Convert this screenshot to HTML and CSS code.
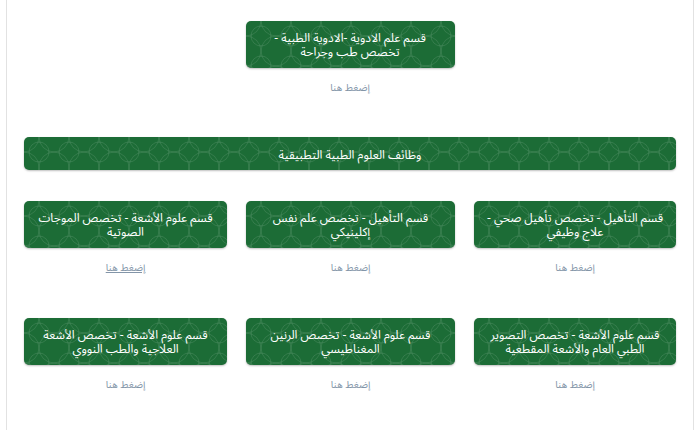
FILE: index.html
```html
<!DOCTYPE html>
<html lang="ar" dir="rtl">
<head>
    <meta charset="UTF-8">
    <meta name="viewport" content="width=device-width, initial-scale=1.0">
    <title>الأقسام والتخصصات</title>
    <link rel="stylesheet" href="styles.css">
</head>
<body>
    <div class="page">
        <div class="single">
            <div class="card">
                <div class="card-box">قسم علم الادوية -الادوية الطبية - تخصص طب وجراحة</div>
                <a class="card-link" href="#">إضغط هنا</a>
            </div>
        </div>

        <div class="section-bar">وظائف العلوم الطبية التطبيقية</div>

        <div class="card-grid">
            <div class="card">
                <div class="card-box">قسم التأهيل - تخصص تأهيل صحي - علاج وظيفي</div>
                <a class="card-link" href="#">إضغط هنا</a>
            </div>
            <div class="card">
                <div class="card-box">قسم التأهيل - تخصص علم نفس إكلينيكي</div>
                <a class="card-link" href="#">إضغط هنا</a>
            </div>
            <div class="card">
                <div class="card-box">قسم علوم الأشعة - تخصص الموجات الصوتية</div>
                <a class="card-link is-hover" href="#">إضغط هنا</a>
            </div>
            <div class="card">
                <div class="card-box">قسم علوم الأشعة - تخصص التصوير الطبي العام والأشعة المقطعية</div>
                <a class="card-link" href="#">إضغط هنا</a>
            </div>
            <div class="card">
                <div class="card-box">قسم علوم الأشعة - تخصص الرنين المغناطيسي</div>
                <a class="card-link" href="#">إضغط هنا</a>
            </div>
            <div class="card">
                <div class="card-box">قسم علوم الأشعة - تخصص الأشعة العلاجية والطب النووي</div>
                <a class="card-link" href="#">إضغط هنا</a>
            </div>
        </div>
    </div>
</body>
</html>
```

FILE: styles.css
```css
body {
    margin: 0;
    background: #fff;
    font-family: "Noto Sans Arabic", "DejaVu Sans", sans-serif;
}

.page {
    margin: 0 6px;
    min-height: 430px;
    box-sizing: border-box;
    padding: 21px 17px 0;
    border-left: 1px solid #e2e2e2;
    border-right: 1px solid #e2e2e2;
}

/* green pattern boxes */
.card-box,
.section-bar {
    background-color: #1c6c36;
    background-image: url("data:image/svg+xml,%3Csvg xmlns='http://www.w3.org/2000/svg' width='30' height='30'%3E%3Cg fill='none' stroke='%23ffffff' stroke-opacity='0.1' stroke-width='1'%3E%3Ccircle cx='0' cy='0' r='15'/%3E%3Ccircle cx='30' cy='0' r='15'/%3E%3Ccircle cx='0' cy='30' r='15'/%3E%3Ccircle cx='30' cy='30' r='15'/%3E%3Ccircle cx='15' cy='15' r='10'/%3E%3C/g%3E%3C/svg%3E");
    color: #fff;
    border-radius: 5px;
    box-shadow: 0 1px 2px rgba(0, 0, 0, 0.25);
}

.single {
    display: flex;
    justify-content: center;
    margin-bottom: 42px;
}

.single .card {
    width: 209px;
}

.single .card-box {
    padding: 3px 14px 0;
}

.card {
    display: flex;
    flex-direction: column;
    align-items: center;
}

.card-box {
    width: 100%;
    height: 47px;
    box-sizing: border-box;
    padding: 3px 11px 0;
    display: flex;
    align-items: center;
    justify-content: center;
    text-align: center;
    font-size: 12px;
    line-height: 14px;
}

.card-link {
    margin-top: 13px;
    font-size: 10px;
    line-height: 14px;
    color: #8395a8;
    text-decoration: none;
}

.card-link.is-hover {
    text-decoration: underline;
}

.section-bar {
    height: 33px;
    padding-top: 3px;
    box-sizing: border-box;
    display: flex;
    align-items: center;
    justify-content: center;
    font-size: 12px;
    margin-bottom: 31px;
}

.card-grid {
    display: grid;
    grid-template-columns: 202px 209px 203px;
    column-gap: 19px;
    row-gap: 43px;
}
```
